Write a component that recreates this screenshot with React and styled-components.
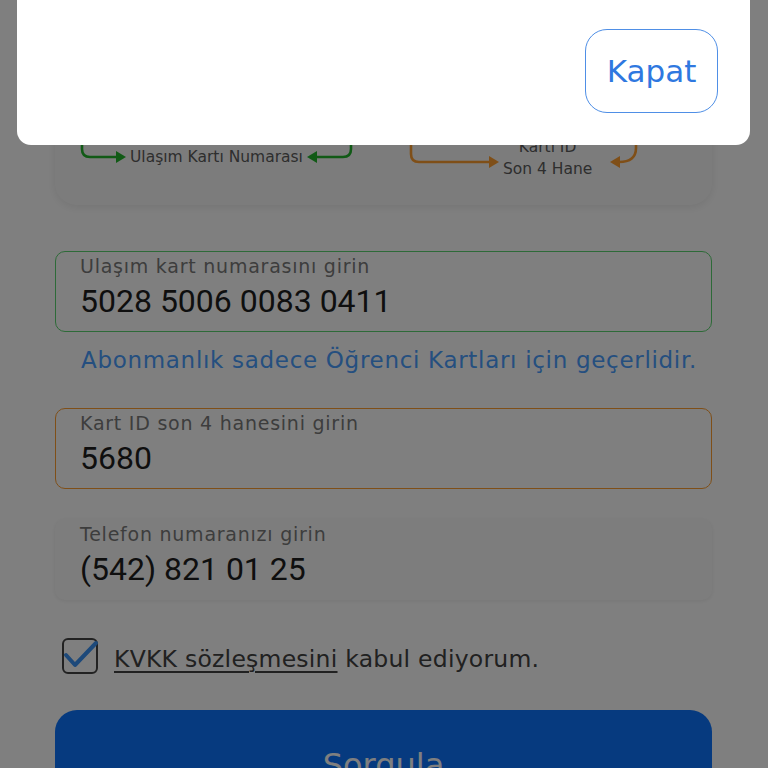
import styled, { createGlobalStyle } from 'styled-components';

const GlobalStyle = createGlobalStyle`
  html, body {
    margin: 0;
    padding: 0;
    background: #ffffff;
    overflow: hidden;
  }
  * { box-sizing: border-box; }
`;

const GREEN_LINE = '#22b42c';
const GREEN_BORDER = '#5bd470';
const ORANGE = '#ff9e30';
const BLUE = '#0c74ff';
const FONT = "'DejaVu Sans', 'Lato', sans-serif";

const App = () => {
  return (
    <>
      <GlobalStyle />
      <Page>
        <InfoCard>
          <LegendRow>
            <LegendGroup>
              <svg width="46" height="31" viewBox="0 0 46 31">
                <path d="M2 0 V15 Q2 23 10 23 H37" fill="none" stroke={GREEN_LINE} strokeWidth="2.6" />
                <polygon points="36,17 46,23 36,29" fill={GREEN_LINE} />
              </svg>
              <LegendText $top={13}>Ulaşım Kartı Numarası</LegendText>
              <svg width="46" height="31" viewBox="0 0 46 31">
                <polygon points="10,17 0,23 10,29" fill={GREEN_LINE} />
                <path d="M9 23 H36 Q44 23 44 15 V0" fill="none" stroke={GREEN_LINE} strokeWidth="2.6" />
              </svg>
            </LegendGroup>
            <LegendGroup>
              <svg width="90" height="35" viewBox="0 0 90 35">
                <path d="M2 0 V20 Q2 28 10 28 H81" fill="none" stroke={ORANGE} strokeWidth="2.6" />
                <polygon points="80,22 90,28 80,34" fill={ORANGE} />
              </svg>
              <LegendText $top={2} $wide>
                Kartı ID<br />Son 4 Hane
              </LegendText>
              <svg width="30" height="35" viewBox="0 0 30 35">
                <polygon points="0,28 10,22 10,34" fill={ORANGE} />
                <path d="M9 28 Q26 28 26 14 V0" fill="none" stroke={ORANGE} strokeWidth="2.6" />
              </svg>
            </LegendGroup>
          </LegendRow>
        </InfoCard>

        <Field $border={GREEN_BORDER} $mt={46}>
          <FieldLabel>Ulaşım kart numarasını girin</FieldLabel>
          <FieldValue>5028 5006 0083 0411</FieldValue>
        </Field>
        <Helper>Abonmanlık sadece Öğrenci Kartları için geçerlidir.</Helper>

        <Field $border={ORANGE} $mt={33}>
          <FieldLabel>Kart ID son 4 hanesini girin</FieldLabel>
          <FieldValue>5680</FieldValue>
        </Field>

        <Field $mt={30}>
          <FieldLabel>Telefon numaranızı girin</FieldLabel>
          <FieldValue>(542) 821 01 25</FieldValue>
        </Field>

        <AgreeRow>
          <CheckBox>
            <svg width="40" height="36" viewBox="0 0 40 36">
              <path d="M4 17 L13 27 L34 5" fill="none" stroke="#3a92f4" strokeWidth="4" strokeLinecap="round" strokeLinejoin="round" />
            </svg>
          </CheckBox>
          <AgreeText>
            <u>KVKK sözleşmesini</u> kabul ediyorum.
          </AgreeText>
        </AgreeRow>

        <SubmitButton>Sorgula</SubmitButton>
      </Page>

      <Overlay />
      <Modal>
        <CloseButton>Kapat</CloseButton>
      </Modal>
    </>
  );
};

const Page = styled.div`
  height: 768px;
  padding: 20px 56px 0 55px;
  font-family: ${FONT};
  overflow: hidden;
`;

const InfoCard = styled.div`
  height: 185px;
  background: #f9f9f9;
  border-radius: 22px;
  box-shadow: 0 2px 10px rgba(0, 0, 0, 0.09);
  display: flex;
  flex-direction: column;
  justify-content: flex-end;
  padding: 0 0 25px 25px;
`;

const LegendRow = styled.div`
  display: flex;
  align-items: flex-start;
  gap: 56px;
`;

const LegendGroup = styled.div`
  display: flex;
  align-items: flex-start;
  gap: 4px;

  svg { flex: none; display: block; }
`;

const LegendText = styled.div`
  margin-top: ${p => p.$top}px;
  font-size: 15.5px;
  line-height: ${p => (p.$wide ? 22 : 20)}px;
  color: #5c5c5c;
  text-align: center;
  padding: ${p => (p.$wide ? '0 14px 0 0' : '0')};
  white-space: nowrap;
`;

const Field = styled.div`
  margin-top: ${p => p.$mt}px;
  height: 81px;
  border: 1.5px solid ${p => p.$border || 'transparent'};
  border-radius: 10px;
  background: ${p => (p.$border ? 'transparent' : '#fbfbfb')};
  box-shadow: ${p => (p.$border ? 'none' : '0 1px 4px rgba(0,0,0,0.08)')};
  padding: 4px 24px 0;
`;

const FieldLabel = styled.div`
  font-size: 19px;
  line-height: 20px;
  letter-spacing: 0.04em;
  color: #7a7a7a;
`;

const FieldValue = styled.div`
  font-family: 'Roboto', sans-serif;
  font-size: 32px;
  line-height: 38px;
  margin-top: 6px;
  color: #1e1e1e;
`;

const Helper = styled.div`
  margin-top: 13px;
  padding-left: 26px;
  font-size: 23px;
  line-height: 30px;
  letter-spacing: 0.03em;
  color: #4a9efe;
  white-space: nowrap;
`;

const AgreeRow = styled.div`
  margin-top: 38px;
  display: flex;
  align-items: center;
  gap: 16px;
  padding-left: 7px;
`;

const CheckBox = styled.div`
  position: relative;
  flex: none;
  width: 36px;
  height: 36px;
  border: 2px solid #454545;
  border-radius: 6px;

  svg {
    position: absolute;
    left: -2px;
    top: -2px;
  }
`;

const AgreeText = styled.div`
  padding-top: 6px;
  font-size: 23.5px;
  line-height: 30px;
  color: #424242;
  letter-spacing: 0.01em;
  white-space: nowrap;

  u { text-underline-offset: 4px; }
`;

const SubmitButton = styled.div`
  margin-top: 36px;
  height: 110px;
  border-radius: 22px;
  background: ${BLUE};
  color: #ffffff;
  font-size: 32px;
  display: flex;
  align-items: center;
  justify-content: center;
`;

const Overlay = styled.div`
  position: fixed;
  inset: 0;
  background: rgba(0, 0, 0, 0.5);
`;

const Modal = styled.div`
  position: fixed;
  top: 0;
  left: 17px;
  right: 18px;
  height: 145px;
  background: #ffffff;
  border-radius: 0 0 14px 14px;
  display: flex;
  justify-content: flex-end;
  align-items: flex-end;
  padding: 0 32px 32px;
  font-family: ${FONT};
`;

const CloseButton = styled.div`
  width: 133px;
  height: 84px;
  border: 1.5px solid #4f8fe6;
  border-radius: 22px;
  color: #2f78e0;
  font-size: 31px;
  display: flex;
  align-items: center;
  justify-content: center;
`;

export default App;
